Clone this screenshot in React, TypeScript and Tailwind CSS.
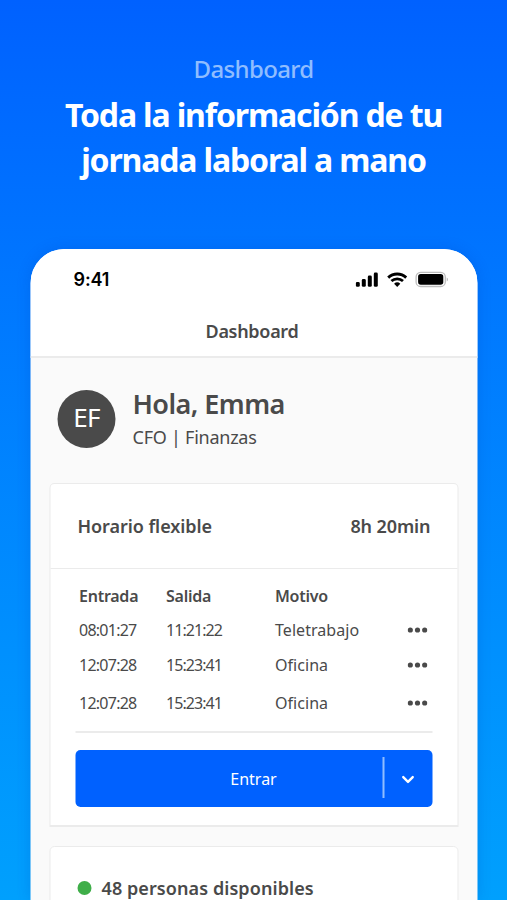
import { ChevronDown } from 'lucide-react';

const entries = [
  { start: '08:01:27', end: '11:21:22', reason: 'Teletrabajo', height: 'h-[33px]' },
  { start: '12:07:28', end: '15:23:41', reason: 'Oficina', height: 'h-[38px]' },
  { start: '12:07:28', end: '15:23:41', reason: 'Oficina', height: 'h-[38px]' },
];

function StatusIcons() {
  return (
    <svg width="94" height="18" viewBox="0 0 94 18" fill="none">
      {/* signal */}
      <rect x="0.3" y="11" width="4" height="4.8" rx="1.4" fill="#000" />
      <rect x="6.3" y="8" width="4" height="7.8" rx="1.4" fill="#000" />
      <rect x="12.3" y="4.6" width="4" height="11.2" rx="1.4" fill="#000" />
      <rect x="18.3" y="1.5" width="4" height="14.3" rx="1.4" fill="#000" />
      {/* wifi */}
      <path d="M32.7 6.6a13.2 13.2 0 0 1 18 0" stroke="#000" strokeWidth="2.9" />
      <path d="M35.9 10.1a8.4 8.4 0 0 1 11.6 0" stroke="#000" strokeWidth="2.7" />
      <path d="M38.6 12.8a4.5 4.5 0 0 1 6.2 0l-3.1 3.2z" fill="#000" />
      {/* battery */}
      <rect x="60.6" y="1.3" width="29.2" height="14.2" rx="4.6" stroke="#bdbdbd" strokeWidth="1.3" />
      <rect x="62.6" y="3.1" width="25.2" height="10.6" rx="2.6" fill="#000" />
      <path d="M91.2 6.4v4c1.8-.7 1.8-3.3 0-4z" fill="#bdbdbd" />
    </svg>
  );
}

function Dots() {
  return (
    <svg width="20" height="6" viewBox="0 0 20 6" fill="#4a4a4a">
      <circle cx="2.8" cy="3" r="2.6" />
      <circle cx="10" cy="3" r="2.6" />
      <circle cx="17.2" cy="3" r="2.6" />
    </svg>
  );
}

export default function App() {
  return (
    <div className="flex h-[900px] w-[507px] flex-col overflow-hidden bg-linear-to-b from-[#0061ff] to-[#00a0fd] font-['Noto_Sans',sans-serif] text-[#4a4a4a]">
      <header className="flex h-[249px] shrink-0 flex-col items-center pt-[52px] text-center">
        <p className="text-[24px] leading-[33px] font-medium tracking-[-0.65px] text-[#8fbdff]">Dashboard</p>
        <h1 className="mt-[7px] text-[32px] leading-[45px] font-bold tracking-[-1.15px] whitespace-nowrap text-white">
          Toda la información de tu
          <br />
          jornada laboral a mano
        </h1>
      </header>

      <main className="mx-auto h-[651px] w-[447px] shrink-0 translate-x-[0.5px] overflow-hidden rounded-t-[34px] bg-[#fafafa] shadow-[0_0_14px_rgba(0,60,180,0.2)]">
        <div className="h-[109px] border-b-2 border-[#ebebeb] bg-white">
          <div className="flex h-[61px] items-center justify-between pr-[28px] pl-[43px]">
            <span className="font-['Inter',sans-serif] text-[18px] font-semibold tracking-[-0.1px] text-black">9:41</span>
            <StatusIcons />
          </div>
          <h2 className="pr-[4px] text-center text-[18px] leading-[42px] font-semibold tracking-[-0.3px]">Dashboard</h2>
        </div>

        <section className="flex h-[125px] items-center pb-[4px] pl-[27px]">
          <div className="flex size-[58px] items-center justify-center rounded-full bg-[#4a4a4a] pb-[2px] text-[26px] tracking-[-0.8px] text-white">EF</div>
          <div className="ml-[17px] pt-[3px]">
            <p className="text-[27px] leading-[34px] font-semibold tracking-[-0.55px]">Hola, Emma</p>
            <p className="text-[18px] leading-[32px] tracking-[-0.25px]">CFO | Finanzas</p>
          </div>
        </section>

        <section className="mx-[19px] h-[344px] rounded-t-[5px] border-[1.5px] border-b-2 border-[#ebebeb] bg-white">
          <div className="flex h-[85px] items-center justify-between border-b-[1.5px] border-[#ebebeb] px-[27px] text-[18px] font-semibold">
            <h3 className="tracking-[-0.05px]">Horario flexible</h3>
            <span className="tracking-[-0.1px]">8h 20min</span>
          </div>
          <div className="mx-[25px] border-b-2 border-[#ebebeb] pt-[10px] pb-[9px] text-[16px]">
            <div className="grid h-[34px] grid-cols-[87px_109px_1fr] items-center pl-[3.5px] font-semibold tracking-[-0.25px]">
              <span>Entrada</span>
              <span>Salida</span>
              <span>Motivo</span>
            </div>
            {entries.map((entry, i) => (
              <div key={i} className={`grid grid-cols-[87px_109px_1fr_auto] items-center pr-[5px] pl-[3.5px] ${entry.height}`}>
                <span className="tracking-[-0.75px]">{entry.start}</span>
                <span className="tracking-[-0.95px]">{entry.end}</span>
                <span className="tracking-[0.05px]">{entry.reason}</span>
                <Dots />
              </div>
            ))}
          </div>
          <button className="mx-[25px] mt-[17px] flex h-[57px] w-[357px] items-center rounded-[5px] bg-[#0061ff] text-[16px] text-white">
            <span className="flex-1 pl-[49px] text-center">Entrar</span>
            <span className="mb-[2px] h-[41px] w-[2px] bg-[#8fbdff]" />
            <span className="flex w-[48px] justify-center pt-[1px] pr-[2px]">
              <ChevronDown size={19} strokeWidth={3} />
            </span>
          </button>
        </section>

        <section className="mx-[19px] mt-[19px] flex h-[80px] rounded-t-[5px] border-[1.5px] border-[#ebebeb] bg-white pt-[26px] pl-[27px]">
          <div className="flex h-[30px] items-center gap-[10px]">
            <span className="size-[14px] rounded-full bg-[#3fae49]" />
            <p className="text-[18px] font-semibold tracking-[0.08px]">48 personas disponibles</p>
          </div>
        </section>
      </main>
    </div>
  );
}
